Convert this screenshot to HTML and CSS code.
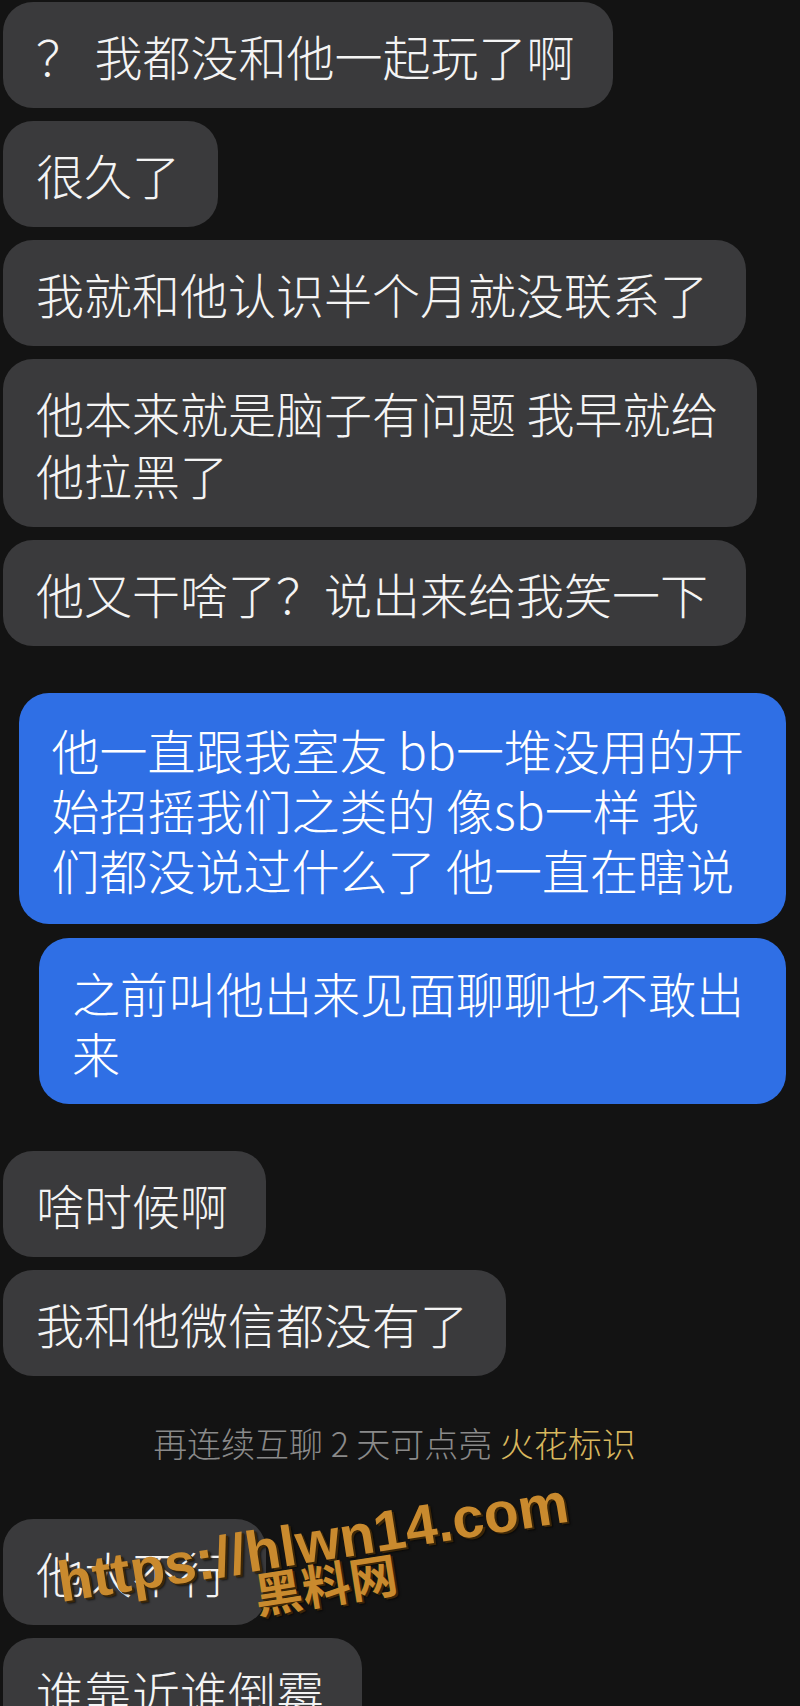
FILE: index.html
```html
<!DOCTYPE html>
<html lang="zh-CN">

<head>
    <meta charset="UTF-8">
    <meta name="viewport" content="width=device-width, initial-scale=1.0">
    <title>聊天记录</title>
    <link rel="stylesheet" href="styles.css">
</head>

<body>
    <div class="chat">
        <!-- their messages -->
        <div class="group">
            <div class="bubble in">？ 我都没和他一起玩了啊</div>
            <div class="bubble in">很久了</div>
            <div class="bubble in">我就和他认识半个月就没联系了</div>
            <div class="bubble in">他本来就是脑子有问题 我早就给<br>他拉黑了</div>
            <div class="bubble in">他又干啥了？说出来给我笑一下</div>
        </div>

        <!-- my messages -->
        <div class="group mine">
            <div class="bubble out first">他一直跟我室友 bb一堆没用的开<br>始招摇我们之类的 像sb一样 我<br>们都没说过什么了 他一直在瞎说</div>
            <div class="bubble out">之前叫他出来见面聊聊也不敢出<br>来</div>
        </div>

        <div class="group">
            <div class="bubble in">啥时候啊</div>
            <div class="bubble in">我和他微信都没有了</div>
        </div>

        <p class="system-tip">再连续互聊 2 天可点亮 <span class="spark">火花标识</span></p>

        <div class="group">
            <div class="bubble in">他太不行</div>
            <div class="bubble in">谁靠近谁倒霉</div>
        </div>

        <!-- watermark stamped over the screenshot -->
        <div class="watermark url">https://hlwn14.com</div>
        <div class="watermark name">黑料网</div>
    </div>
</body>

</html>
```

FILE: styles.css
```css
* {
    box-sizing: border-box;
}

body {
    margin: 0;
    background-color: #131313;
    font-family: "Noto Sans CJK SC", "Noto Sans", sans-serif;
}

.chat {
    position: relative;
    height: 1706px;
    overflow: hidden;
    padding: 2px 14px 0 3px;
}

.group {
    display: flex;
    flex-direction: column;
    align-items: flex-start;
    gap: 13px;
    margin-bottom: 47px;
}

.group.mine {
    align-items: flex-end;
    gap: 14px;
}

.bubble {
    font-size: 48px;
    font-weight: 300;
    line-height: 62px;
    color: #f4f4f4;
    border-radius: 30px;
    white-space: nowrap;
}

.bubble.in {
    background-color: #3a3a3c;
    padding: 22px 38px 22px 33px;
}

.bubble.out {
    background-color: #2f6fe5;
    color: #ffffff;
    line-height: 60px;
    padding: 24px 42px 22px 33px;
}

.bubble.out.first {
    padding-top: 26px;
    padding-bottom: 25px;
}

.system-tip {
    margin: 4px 0 56px;
    text-align: center;
    font-size: 34px;
    font-weight: 300;
    line-height: 40px;
    color: #8a8a8a;
}

.spark {
    color: #d8b75e;
}

.watermark {
    position: absolute;
    font-weight: bold;
    line-height: 1;
    color: #c98a2e;
    text-shadow: 2px 2px 0 #3b2608, 3px 3px 2px rgba(0, 0, 0, 0.6);
    white-space: nowrap;
}

.watermark.url {
    left: 61px;
    top: 1554px;
    font-family: "Liberation Sans", Arial, sans-serif;
    font-size: 57px;
    transform-origin: 0 48px;
    transform: rotate(-9deg);
}

.watermark.name {
    left: 257px;
    top: 1569px;
    font-family: "Noto Sans CJK SC", sans-serif;
    font-size: 48px;
    transform-origin: 0 42px;
    transform: rotate(-9deg);
}
```
